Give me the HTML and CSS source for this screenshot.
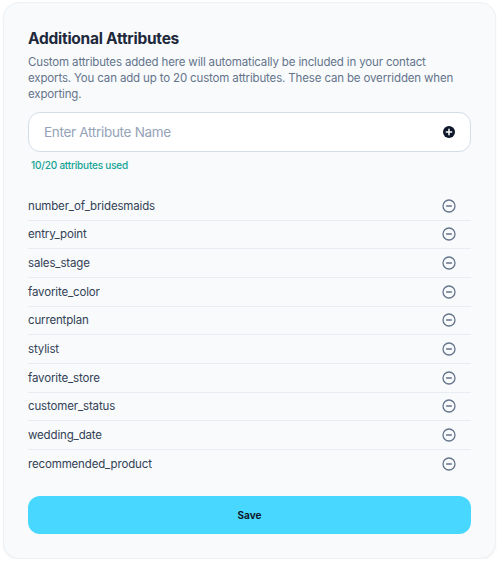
FILE: index.html
```html
<!DOCTYPE html>
<html lang="en">
<head>
<meta charset="utf-8">
<title>Additional Attributes</title>
<link rel="stylesheet" href="styles.css">
</head>
<body>
<div class="card">
  <h2 class="title">Additional Attributes</h2>
  <p class="desc">Custom attributes added here will automatically be included in your contact exports. You can add up to 20 custom attributes. These can be overridden when exporting.</p>
  <div class="input-wrap">
    <input class="attr-input" type="text" placeholder="Enter Attribute Name">
    <button class="add-btn" aria-label="Add">
      <svg width="12" height="12" viewBox="0 0 12 12"><circle cx="6" cy="6" r="6" fill="#0f172a"/><path d="M6 3.3v5.4M3.3 6h5.4" stroke="#fff" stroke-width="1.5" stroke-linecap="round"/></svg>
    </button>
  </div>
  <div class="counter">10/20 attributes used</div>
  <ul class="list">
    <li class="row"><span>number_of_bridesmaids</span><svg class="rm" width="14" height="14" viewBox="0 0 14 14"><circle cx="7" cy="7" r="6" fill="none" stroke="#64748b" stroke-width="1.3"/><path d="M4.6 7h4.8" stroke="#64748b" stroke-width="1.4" stroke-linecap="round"/></svg></li>
    <li class="row"><span>entry_point</span><svg class="rm" width="14" height="14" viewBox="0 0 14 14"><circle cx="7" cy="7" r="6" fill="none" stroke="#64748b" stroke-width="1.3"/><path d="M4.6 7h4.8" stroke="#64748b" stroke-width="1.4" stroke-linecap="round"/></svg></li>
    <li class="row"><span>sales_stage</span><svg class="rm" width="14" height="14" viewBox="0 0 14 14"><circle cx="7" cy="7" r="6" fill="none" stroke="#64748b" stroke-width="1.3"/><path d="M4.6 7h4.8" stroke="#64748b" stroke-width="1.4" stroke-linecap="round"/></svg></li>
    <li class="row"><span>favorite_color</span><svg class="rm" width="14" height="14" viewBox="0 0 14 14"><circle cx="7" cy="7" r="6" fill="none" stroke="#64748b" stroke-width="1.3"/><path d="M4.6 7h4.8" stroke="#64748b" stroke-width="1.4" stroke-linecap="round"/></svg></li>
    <li class="row"><span>currentplan</span><svg class="rm" width="14" height="14" viewBox="0 0 14 14"><circle cx="7" cy="7" r="6" fill="none" stroke="#64748b" stroke-width="1.3"/><path d="M4.6 7h4.8" stroke="#64748b" stroke-width="1.4" stroke-linecap="round"/></svg></li>
    <li class="row"><span>stylist</span><svg class="rm" width="14" height="14" viewBox="0 0 14 14"><circle cx="7" cy="7" r="6" fill="none" stroke="#64748b" stroke-width="1.3"/><path d="M4.6 7h4.8" stroke="#64748b" stroke-width="1.4" stroke-linecap="round"/></svg></li>
    <li class="row"><span>favorite_store</span><svg class="rm" width="14" height="14" viewBox="0 0 14 14"><circle cx="7" cy="7" r="6" fill="none" stroke="#64748b" stroke-width="1.3"/><path d="M4.6 7h4.8" stroke="#64748b" stroke-width="1.4" stroke-linecap="round"/></svg></li>
    <li class="row"><span>customer_status</span><svg class="rm" width="14" height="14" viewBox="0 0 14 14"><circle cx="7" cy="7" r="6" fill="none" stroke="#64748b" stroke-width="1.3"/><path d="M4.6 7h4.8" stroke="#64748b" stroke-width="1.4" stroke-linecap="round"/></svg></li>
    <li class="row"><span>wedding_date</span><svg class="rm" width="14" height="14" viewBox="0 0 14 14"><circle cx="7" cy="7" r="6" fill="none" stroke="#64748b" stroke-width="1.3"/><path d="M4.6 7h4.8" stroke="#64748b" stroke-width="1.4" stroke-linecap="round"/></svg></li>
    <li class="row"><span>recommended_product</span><svg class="rm" width="14" height="14" viewBox="0 0 14 14"><circle cx="7" cy="7" r="6" fill="none" stroke="#64748b" stroke-width="1.3"/><path d="M4.6 7h4.8" stroke="#64748b" stroke-width="1.4" stroke-linecap="round"/></svg></li>
  </ul>
  <button class="save">Save</button>
</div>
</body>
</html>
```

FILE: styles.css
```css
* { box-sizing: border-box; }
html, body { margin: 0; background: #ffffff; }
body {
  padding: 2px 4px 0 3px;
  font-family: Inter, "Noto Sans", "Liberation Sans", sans-serif;
}
.card {
  width: 493px;
  height: 557px;
  background: #f8fafc;
  border: 1px solid #eef1f5;
  border-radius: 16px;
  box-shadow: 0 1px 2px rgba(15, 23, 42, 0.06);
  padding: 24px 24px 0 24px;
}
.title {
  margin: 0;
  font-size: 15.5px;
  line-height: 24px;
  font-weight: 700;
  color: #1e293b;
  letter-spacing: -0.25px;
}
.desc {
  margin: 3px 0 0 0;
  font-size: 11.5px;
  line-height: 16px;
  letter-spacing: -0.15px;
  color: #64748b;
}
.input-wrap {
  margin-top: 10px;
  height: 40px;
  background: #ffffff;
  border: 1px solid #d5dde8;
  border-radius: 12px;
  display: flex;
  align-items: center;
  padding: 0 15px 0 15px;
}
.attr-input {
  flex: 1;
  border: none;
  outline: none;
  background: transparent;
  font-family: inherit;
  font-size: 13.5px;
  letter-spacing: -0.3px;
  color: #0f172a;
  padding: 0;
}
.attr-input::placeholder { color: #94a3b8; }
.add-btn {
  border: none;
  background: none;
  padding: 0;
  display: flex;
  cursor: pointer;
}
.counter {
  margin-top: 5px;
  padding-left: 3px;
  font-size: 10px;
  line-height: 16px;
  letter-spacing: -0.2px;
  font-weight: 500;
  color: #14a394;
}
.list {
  list-style: none;
  margin: 19px 0 0 0;
  padding: 0;
}
.row {
  height: 28.67px;
  display: flex;
  align-items: center;
  justify-content: space-between;
  padding-right: 15px;
  border-bottom: 1.5px solid #e8edf3;
  font-size: 11.5px;
  letter-spacing: -0.15px;
  color: #334155;
}
.row:last-child { border-bottom: none; }
.rm { display: block; }
.save {
  margin-top: 17px;
  width: 100%;
  height: 38px;
  border: none;
  border-radius: 12px;
  background: #48d8ff;
  font-family: inherit;
  font-size: 10px;
  font-weight: 700;
  color: #0f172a;
  cursor: pointer;
}
```
